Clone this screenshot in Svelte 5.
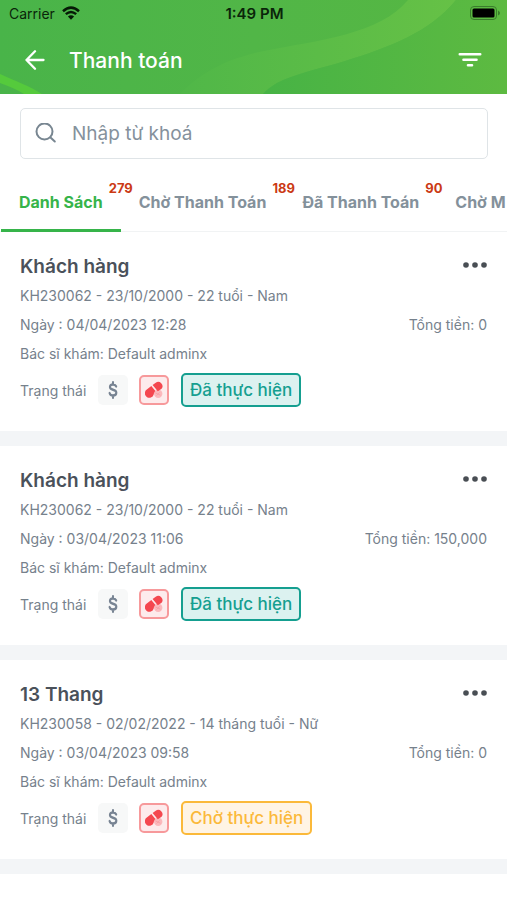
<script>
  const tabs = [
    { label: 'Danh Sách', count: 279 },
    { label: 'Chờ Thanh Toán', count: 189 },
    { label: 'Đã Thanh Toán', count: 90 },
    { label: 'Chờ M', count: 0 }
  ];
  const records = [
    { name: 'Khách hàng', info: 'KH230062 - 23/10/2000 - 22 tuổi - Nam', date: '04/04/2023 12:28', total: '0', status: 'Đã thực hiện', kind: 'done' },
    { name: 'Khách hàng', info: 'KH230062 - 23/10/2000 - 22 tuổi - Nam', date: '03/04/2023 11:06', total: '150,000', status: 'Đã thực hiện', kind: 'done' },
    { name: '13 Thang', info: 'KH230058 - 02/02/2022 - 14 tháng tuổi - Nữ', date: '03/04/2023 09:58', total: '0', status: 'Chờ thực hiện', kind: 'waiting' }
  ];
  let active = $state(0);
  let query = $state('');
</script>

<div class="screen">
  <header>
    <svg class="waves" viewBox="0 0 507 94" preserveAspectRatio="none" aria-hidden="true">
      <defs>
        <linearGradient id="base" x1="0" x2="1">
          <stop offset="0" stop-color="#49b449" />
          <stop offset="0.5" stop-color="#51b647" />
          <stop offset="1" stop-color="#57b742" />
        </linearGradient>
        <linearGradient id="band" x1="0" x2="1">
          <stop offset="0" stop-color="#50b748" />
          <stop offset="1" stop-color="#66c146" />
        </linearGradient>
        <linearGradient id="low" x1="0" x2="1">
          <stop offset="0" stop-color="#47b345" />
          <stop offset="1" stop-color="#5dba41" />
        </linearGradient>
      </defs>
      <rect width="507" height="94" fill="url(#base)" />
      <path d="M180 94C205 68 235 57 264 51C320 40 380 34 408 0H456C430 32 390 47 345 61C305 73 278 77 263 94Z" fill="url(#band)" />
      <path d="M263 94C278 77 305 73 345 61C390 47 430 32 456 0H507V94Z" fill="url(#low)" />
      <path d="M0 74C15 81 30 86 42 94H24C16 89 8 86 0 83Z" fill="#55ca3c" />
    </svg>
    <div class="statusbar">
      <span class="carrier">
        Carrier
        <svg width="18" height="14" viewBox="0 0 18 14" aria-hidden="true">
          <path d="M1 5.2Q9-2 17 5.2" fill="none" stroke="#061a06" stroke-width="2.5" />
          <path d="M3.8 8.2Q9 3.6 14.2 8.2" fill="none" stroke="#061a06" stroke-width="2.4" />
          <path d="M9 13.8L5.9 10.6Q9 8 12.1 10.6Z" fill="#061a06" />
        </svg>
      </span>
      <span class="time">1:49 PM</span>
      <svg class="battery" width="30" height="14" viewBox="0 0 30 14" aria-hidden="true">
        <rect x="0.5" y="0.5" width="26" height="13" rx="3.5" fill="none" stroke="#3a7d2c" />
        <rect x="2.500" y="2.500" width="22" height="9" rx="1.500" fill="#000" />
        <path d="M28 4.5Q30 5.5 30 7T28 9.5Z" fill="#3a7d2c" />
      </svg>
    </div>
    <div class="navbar">
      <button class="icon" aria-label="Quay lại">
        <svg width="20" height="20" viewBox="0 0 20 20" fill="none" stroke="#fff" stroke-width="2.300" stroke-linecap="round" stroke-linejoin="round">
          <path d="M18.500 10H1.500M10 1.300L1.500 10L10 18.700" />
        </svg>
      </button>
      <h1>Thanh toán</h1>
      <button class="icon" aria-label="Bộ lọc">
        <svg width="24" height="16" viewBox="0 0 24 16" fill="none" stroke="#fff" stroke-width="2.6" stroke-linecap="round">
          <path d="M1.8 2.2H22.2M5.5 7.700H18.500M10 13.200H14" />
        </svg>
      </button>
    </div>
  </header>

  <main>
    <label class="search">
      <svg width="22" height="22" viewBox="0 0 22 22" fill="none" stroke="#788691" stroke-width="2" stroke-linecap="round" aria-hidden="true">
        <circle cx="9.500" cy="8.500" r="8" />
        <path d="M15.500 14.500L19.800 18.500" />
      </svg>
      <input type="text" placeholder="Nhập từ khoá" aria-label="Nhập từ khoá" bind:value={query} />
    </label>

    <div class="tabs" role="tablist">
      {#each tabs as tab, i}
        <button class="tab" class:active={active === i} role="tab" aria-selected={active === i} onclick={() => (active = i)}>
          {tab.label}
          {#if tab.count}<span class="count">{tab.count}</span>{/if}
        </button>
      {/each}
    </div>

    {#each records as r}
      <article>
        <div class="row">
          <h2>{r.name}</h2>
          <button class="more" aria-label="Thêm">
            <svg width="24" height="6" viewBox="0 0 24 6" fill="#494e54">
              <circle cx="3" cy="3" r="2.8" /><circle cx="12" cy="3" r="2.8" /><circle cx="21" cy="3" r="2.8" />
            </svg>
          </button>
        </div>
        <div class="row">{r.info}</div>
        <div class="row"><span>Ngày : {r.date}</span><span>Tổng tiền: {r.total}</span></div>
        <div class="row">Bác sĩ khám: Default adminx</div>
        <div class="state">
          <span class="caption">Trạng thái</span>
          <button class="chip pay" aria-label="Thanh toán">
            <svg width="10" height="18" viewBox="0 0 12 18" preserveAspectRatio="none" fill="none" stroke="#788493" stroke-width="2.5" stroke-linecap="round" aria-hidden="true">
              <path d="M6 1.300V3.400M6 14.600V16.700M9.800 5.400C9 4 7.800 3.500 6 3.500C3.800 3.500 2.300 4.500 2.300 6.100C2.300 10 10 7.600 10 11.800C10 13.500 8.300 14.500 6 14.500C4 14.500 2.500 13.700 1.900 12.100" />
            </svg>
          </button>
          <button class="chip drug" aria-label="Đơn thuốc">
            <svg width="18" height="18" viewBox="0 0 18 18" aria-hidden="true">
              <circle cx="13.200" cy="12.800" r="4.200" fill="#fbb9bd" />
              <path d="M10.500 12L15.500 14.200M11.500 14.600L14.800 11.300" stroke="#f7a0a5" stroke-width="0.900" />
              <path d="M7.600 3.900L10.700 1.700A4.300 4.300 0 0 1 16.600 7.800L12.800 10.200Z" fill="#f4474f" />
              <path d="M6.300 5L10.400 9.900C9.200 11 9 12 8.700 13.500A4.500 4.500 0 1 1 1.800 8.600Z" fill="#f4474f" />
            </svg>
          </button>
          <span class="status {r.kind}">{r.status}</span>
        </div>
      </article>
    {/each}
  </main>
</div>

<style>
  :global(body) { background: #fff; }
  .screen {
    font-family: Inter, Roboto, 'Liberation Sans', sans-serif;
    font-size: 14px;
    color: #76818c;
    min-height: 100vh;
    overflow: hidden;
  }
  button { font: inherit; color: inherit; background: none; border: 0; margin: 0; padding: 0; cursor: pointer; }
  h1, h2 { margin: 0; }
  svg { display: block; }
  header { position: relative; overflow: hidden; }
  .waves { position: absolute; inset: 0; width: 100%; height: 100%; }
  .statusbar {
    position: relative;
    display: grid;
    grid-template-columns: 1fr auto 1fr;
    align-items: center;
    height: 26px;
    padding: 0 7px 0 9px;
    color: #0a250a;
  }
  .carrier { display: flex; align-items: center; gap: 7px; }
  .time { font-size: 15px; font-weight: 600; }
  .battery { justify-self: end; }
  .navbar {
    position: relative;
    display: flex;
    align-items: center;
    height: 68px;
    padding: 0 25px;
    color: #fff;
  }
  .icon { flex: none; }
  h1 { flex: 1; margin-left: 24px; font-size: 21px; font-weight: 500; }
  .search {
    display: flex;
    align-items: center;
    gap: 15px;
    height: 49px;
    margin: 14px 19px 14px 20px;
    padding: 0 14px;
    border: 1px solid #dfe4e7;
    border-radius: 5px;
  }
  .search svg { flex: none; }
  input { flex: 1; min-width: 0; padding: 0; border: 0; outline: 0; background: none; font: inherit; font-size: 19px; color: #4a535d; }
  input::placeholder { color: #85919c; opacity: 1; }
  .tabs { display: flex; height: 59px; padding-left: 1px; overflow: hidden; box-shadow: inset 0 -1px #f1f3f4; }
  .tab {
    position: relative;
    flex: none;
    padding: 2px 18px 0;
    font-size: 16px;
    font-weight: 700;
    white-space: nowrap;
    color: #84919b;
    border-bottom: 3px solid transparent;
  }
  .active { color: #36b44a; border-bottom-color: #36b44a; }
  .count { position: absolute; left: calc(100% - 12px); top: 7px; z-index: 1; font-size: 13px; line-height: 16px; font-weight: 700; color: #cb3a14; }
  article { padding: 20px 20px 24px; border-bottom: 15px solid #f3f5f7; }
  .row { display: flex; justify-content: space-between; align-items: center; height: 29px; white-space: nowrap; }
  h2 { font-size: 19px; font-weight: 600; color: #4a515a; }
  .more { padding: 8px 0 12px; }
  .state { display: flex; align-items: center; height: 34px; margin-top: 5px; }
  .caption { width: 78px; }
  .chip { display: flex; align-items: center; justify-content: center; box-sizing: border-box; width: 30px; height: 30px; border-radius: 5px; }
  .pay { background: #f7f8f8; }
  .drug { margin: 0 12px 0 11px; border: 2px solid #f7999b; background: #fdebec; }
  .status { box-sizing: border-box; height: 34px; padding: 0 7px; border: 2px solid; border-radius: 5px; font-size: 17px; line-height: 30px; font-weight: 500; }
  .done { color: #159f90; background: #dcf2f0; }
  .waiting { color: #fbb93a; background: #fff4e5; }
</style>
